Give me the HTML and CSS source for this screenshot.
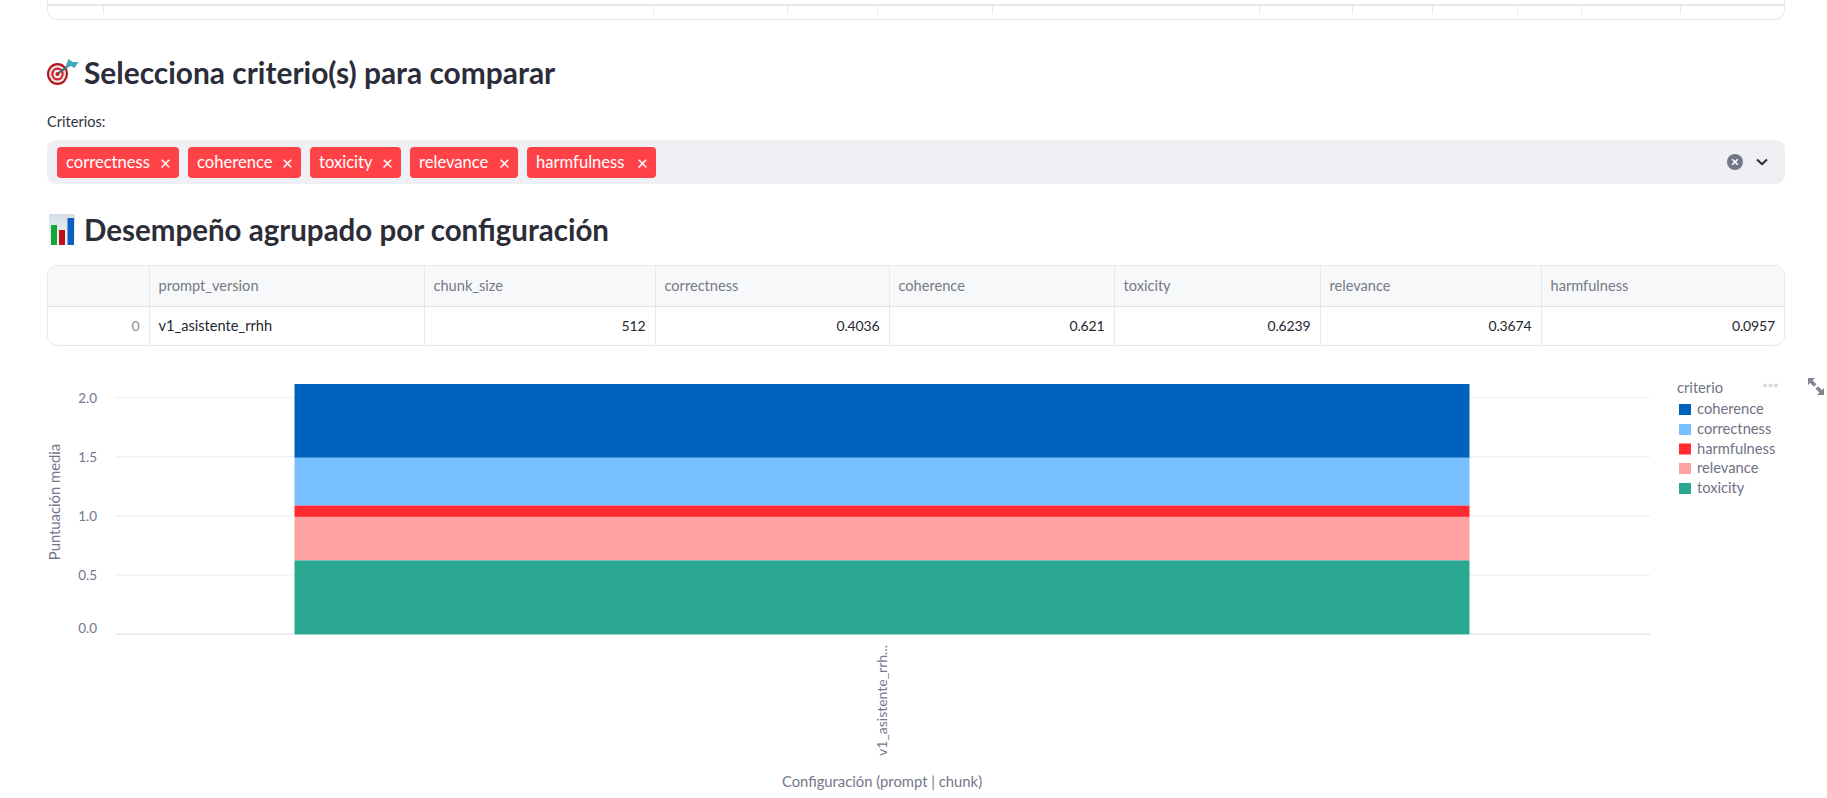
FILE: index.html
```html
<!DOCTYPE html>
<html>
  <head>
    <title>Desempeño por configuración</title>
    <meta charset="UTF-8">
    <meta name="viewport" content="width=device-width, initial-scale=1.0">
    <link rel="stylesheet" href="styles.css">
  </head>

  <body>

    <!-- tail of the table above, the page is scrolled -->
    <div class="frame frame-cut">
      <table class="grid grid-cut">
        <colgroup>
          <col style="width:55px"><col style="width:550px"><col style="width:134px"><col style="width:90px">
          <col style="width:115px"><col style="width:267px"><col style="width:93px"><col style="width:80px">
          <col style="width:85px"><col style="width:64px"><col style="width:99px"><col>
        </colgroup>
        <tr>
          <td></td><td></td><td></td><td></td><td></td><td></td>
          <td></td><td></td><td></td><td></td><td></td><td></td>
        </tr>
      </table>
    </div>

    <h3 class="title title-first">
      <svg class="emoji" width="33" height="32" viewBox="0 0 33 32">
        <ellipse cx="10.5" cy="18" rx="10.5" ry="11" fill="#b5121b"/>
        <ellipse cx="10.5" cy="18" rx="8.4" ry="8.8" fill="#e8e2e0"/>
        <ellipse cx="10.5" cy="18" rx="6.2" ry="6.5" fill="#cf1f27"/>
        <ellipse cx="10.5" cy="18" rx="4" ry="4.2" fill="#f2eeee"/>
        <ellipse cx="10.5" cy="18" rx="2" ry="2.1" fill="#c81a22"/>
        <path d="M11 17.5 L24 8" stroke="#3f5f6a" stroke-width="2"/>
        <path d="M18 12 L21.5 3 L25.5 6 L31.5 6 L27.5 12 L24 10 Z" fill="#3fa9bd"/>
      </svg>
      <span>Selecciona criterio(s) para comparar</span>
    </h3>

    <div class="field-label">Criterios:</div>
    <div class="select">
      <div class="tags">
        <span class="tag tag-a">correctness<i>&times;</i></span>
        <span class="tag tag-b">coherence<i>&times;</i></span>
        <span class="tag tag-c">toxicity<i>&times;</i></span>
        <span class="tag tag-d">relevance<i>&times;</i></span>
        <span class="tag tag-e">harmfulness<i>&times;</i></span>
      </div>
      <div class="select-icons">
        <svg width="16" height="16" viewBox="0 0 16 16">
          <circle cx="8" cy="8" r="8" fill="#73768a"/>
          <path d="M5.2 5.2 L10.8 10.8 M10.8 5.2 L5.2 10.8" stroke="#fff" stroke-width="1.6"/>
        </svg>
        <svg width="12" height="8" viewBox="0 0 12 8">
          <path d="M1 1.5 L6 6.2 L11 1.5" fill="none" stroke="#262730" stroke-width="2"/>
        </svg>
      </div>
    </div>

    <h3 class="title title-second">
      <svg class="emoji-bars" width="26" height="31" viewBox="0 0 26 31">
        <defs>
          <linearGradient id="chartbg" x1="0" y1="0" x2="0" y2="1">
            <stop offset="0" stop-color="#d5dee6"/>
            <stop offset="1" stop-color="#f3f6f8"/>
          </linearGradient>
        </defs>
        <rect width="26" height="31" fill="url(#chartbg)"/>
        <rect x="2" y="11" width="6" height="20" fill="#17a639"/>
        <rect x="10" y="16" width="6" height="15" fill="#c1101c"/>
        <rect x="18.5" y="4" width="6.5" height="27" fill="#0b5fc0"/>
      </svg>
      <span>Desempeño agrupado por configuración</span>
    </h3>

    <div class="frame">
      <table class="grid">
        <colgroup>
          <col style="width:101px"><col style="width:275px"><col style="width:231px"><col style="width:234px">
          <col style="width:225px"><col style="width:206px"><col style="width:221px"><col>
        </colgroup>
        <thead>
          <tr>
            <th></th>
            <th>prompt_version</th>
            <th>chunk_size</th>
            <th>correctness</th>
            <th>coherence</th>
            <th>toxicity</th>
            <th>relevance</th>
            <th>harmfulness</th>
          </tr>
        </thead>
        <tbody>
          <tr>
            <td class="num idx">0</td>
            <td class="txt">v1_asistente_rrhh</td>
            <td class="num">512</td>
            <td class="num">0.4036</td>
            <td class="num">0.621</td>
            <td class="num">0.6239</td>
            <td class="num">0.3674</td>
            <td class="num">0.0957</td>
          </tr>
        </tbody>
      </table>
    </div>

    <svg class="chart" width="1827" height="448" viewBox="0 350 1827 448">
      <g class="gridlines">
        <path d="M115 397.5 H1650"/>
        <path d="M115 456.7 H1650"/>
        <path d="M115 515.9 H1650"/>
        <path d="M115 575.1 H1650"/>
      </g>
      <path class="axis" d="M115 634.3 H1650"/>

      <g class="bars">
        <rect x="294.5" y="384" width="1175" height="73.8" fill="#0062bf"/>
        <rect x="294.5" y="457.8" width="1175" height="47.8" fill="#78c0ff"/>
        <rect x="294.5" y="505.6" width="1175" height="11.3" fill="#ff2b30"/>
        <rect x="294.5" y="516.9" width="1175" height="43.5" fill="#ffa2a2"/>
        <rect x="294.5" y="560.4" width="1175" height="73.9" fill="#2aa892"/>
      </g>

      <g class="tick">
        <text x="97" y="402.5">2.0</text>
        <text x="97" y="461.5">1.5</text>
        <text x="97" y="520.5">1.0</text>
        <text x="97" y="580">0.5</text>
        <text x="97" y="632.5">0.0</text>
      </g>

      <text class="axis-title" transform="translate(60 502) rotate(-90)">Puntuación media</text>
      <text class="tick-x" transform="translate(887 756) rotate(-90)">v1_asistente_rrh...</text>
      <text class="axis-title" x="882" y="786.5">Configuración (prompt | chunk)</text>

      <text class="legend-title" x="1677" y="393">criterio</text>
      <g class="legend">
        <rect x="1679" y="404" width="12" height="11" fill="#0062bf"/>
        <text x="1697" y="414">coherence</text>
        <rect x="1679" y="424" width="12" height="11" fill="#78c0ff"/>
        <text x="1697" y="434">correctness</text>
        <rect x="1679" y="443.5" width="12" height="11" fill="#ff2b30"/>
        <text x="1697" y="453.5">harmfulness</text>
        <rect x="1679" y="463" width="12" height="11" fill="#ffa2a2"/>
        <text x="1697" y="473">relevance</text>
        <rect x="1679" y="483" width="12" height="11" fill="#2aa892"/>
        <text x="1697" y="493">toxicity</text>
      </g>

      <g class="dots">
        <circle cx="1765" cy="385.5" r="2"/>
        <circle cx="1770.5" cy="385.5" r="2"/>
        <circle cx="1776" cy="385.5" r="2"/>
      </g>
      <g class="expand">
        <path d="M1808 378 H1815 L1812.6 380.4 L1816.5 384.3 L1814 386.8 L1810.1 382.9 L1808 385 Z"/>
        <path d="M1824 395 H1817 L1819.4 392.6 L1815.5 388.7 L1818 386.2 L1821.9 390.1 L1824 388 Z"/>
      </g>
    </svg>

  </body>
</html>
```

FILE: styles.css
```css
html, body {
  margin: 0;
  padding: 0;
  height: 798px;
  overflow: hidden;
  background-color: white;
  font-family: "Lato", "Noto Sans", sans-serif;
  color: #262730;
}

.frame {
  margin: 0 42px 0 47px;
  border: 1px solid #e6e8ec;
  border-radius: 10px;
  overflow: hidden;
}

.frame-cut {
  height: 19px;
  border-top: none;
  border-radius: 0 0 10px 10px;
}

.grid {
  width: 100%;
  border-collapse: collapse;
  table-layout: fixed;
  font-size: 14.6px;
}

.grid th, .grid td {
  height: 39px;
  padding: 0 9px;
  box-sizing: border-box;
  border-right: 1px solid #e6e8ec;
  font-weight: normal;
  text-align: left;
}

.grid th:last-child, .grid td:last-child {
  border-right: none;
}

.grid th {
  height: 40px;
  background-color: #f7f8fa;
  color: #767885;
  border-bottom: 1px solid #e1e3e8;
}

.grid td.txt {
  font-size: 14.6px;
}

.grid td.num {
  font-size: 14px;
  letter-spacing: -0.15px;
  text-align: right;
}

.grid td.idx {
  color: #8b8d99;
}

.grid-cut {
  border-top: 2px solid #e6e8ec;
  margin-top: 4px;
}

.grid-cut td {
  height: 9px;
  padding: 0;
}

.title {
  display: flex;
  align-items: center;
  height: 40px;
  margin: 0 42px 0 47px;
  font-size: 29.7px;
  font-weight: 700;
  color: #2b2d39;
  white-space: nowrap;
}

.title-first {
  margin-top: 32px;
  gap: 4px;
}

.title-first span {
  font-size: 29.9px;
}

.title-second {
  margin-top: 25px;
  margin-bottom: 16px;
  gap: 9px;
}

.title-second span {
  font-size: 29.5px;
}

.emoji-bars {
  margin-left: 2px;
}

.field-label {
  margin: 21px 42px 0 47px;
  height: 17px;
  line-height: 17px;
  font-size: 14.6px;
  color: #31333f;
}

.select {
  display: flex;
  justify-content: space-between;
  align-items: center;
  margin: 10px 42px 0 47px;
  height: 44px;
  padding: 0 17px 0 10px;
  border-radius: 9px;
  background-color: #eff0f4;
}

.tags {
  display: flex;
  gap: 9px;
}

.tag {
  display: flex;
  justify-content: space-between;
  align-items: center;
  box-sizing: border-box;
  height: 31px;
  padding: 0 8px 0 9px;
  border-radius: 4px;
  background-color: #ff4248;
  color: white;
  font-size: 16.6px;
}

.tag i {
  font-style: normal;
  font-size: 19px;
  line-height: 1;
}

.tag-a { width: 122px; }
.tag-b { width: 113px; }
.tag-c { width: 91px; }
.tag-d { width: 108px; }
.tag-e { width: 129px; }

.select-icons {
  display: flex;
  align-items: center;
  gap: 13px;
}

.chart {
  display: block;
  margin-top: 4px;
  font-family: "Lato", "Noto Sans", sans-serif;
}

.gridlines path {
  stroke: #f0f2f6;
  stroke-width: 1.5;
  fill: none;
}

.axis {
  stroke: #e3e7ee;
  stroke-width: 1.5;
  fill: none;
}

.tick text {
  font-size: 13.5px;
  fill: #74778a;
  text-anchor: end;
}

.tick-x {
  font-size: 14px;
  fill: #74778a;
}

.axis-title {
  font-size: 14.8px;
  fill: #74778a;
  text-anchor: middle;
}

.legend-title {
  font-size: 14.7px;
  fill: #6f7285;
}

.legend text {
  font-size: 14.7px;
  fill: #6f7285;
}

.dots circle {
  fill: #d8d9df;
}

.expand path {
  fill: #84868f;
}
```
